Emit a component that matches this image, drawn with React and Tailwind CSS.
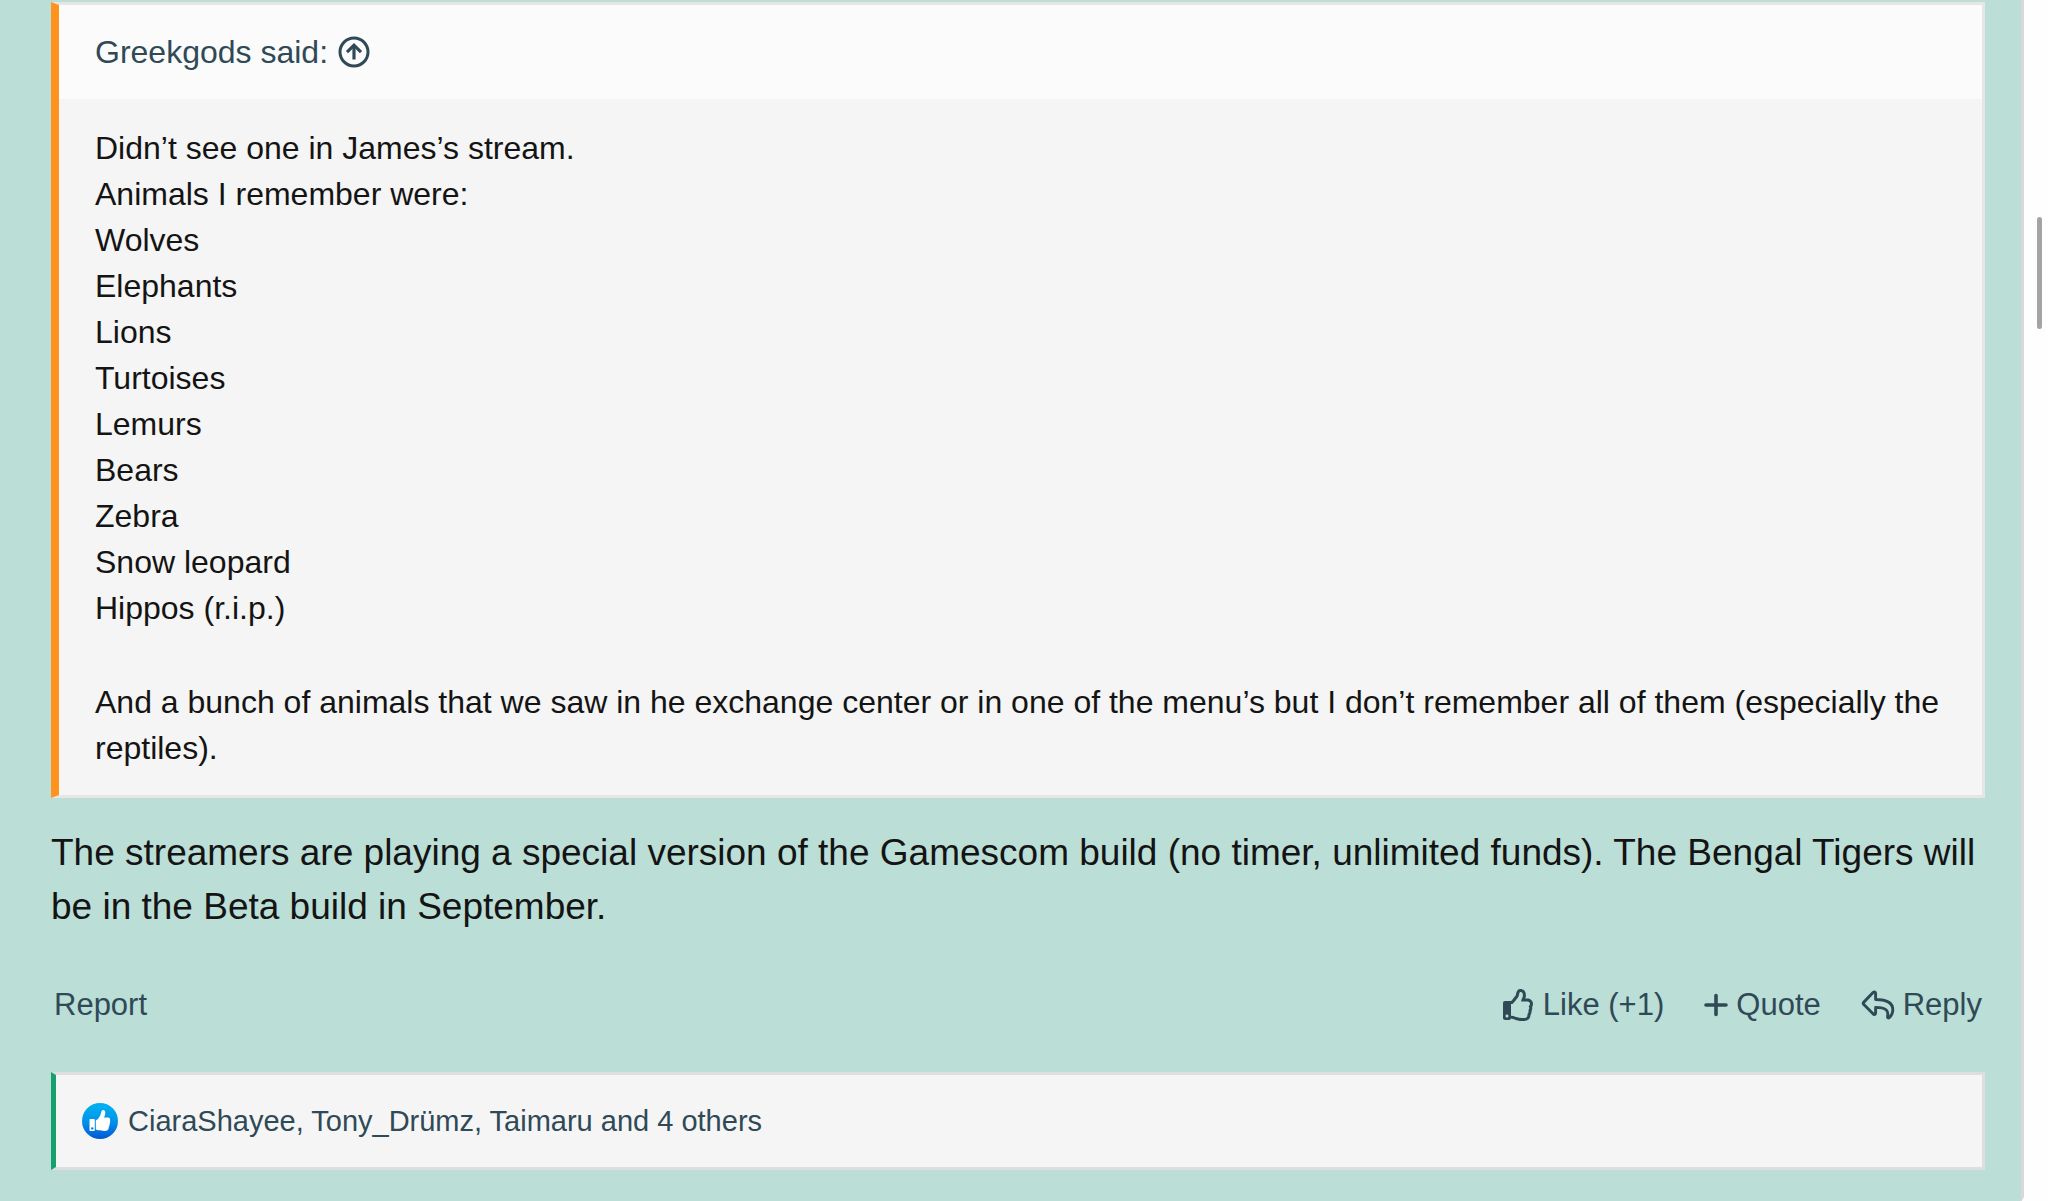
import React from "react";
import { FaRegThumbsUp } from "react-icons/fa";

const animals = [
  "Wolves",
  "Elephants",
  "Lions",
  "Turtoises",
  "Lemurs",
  "Bears",
  "Zebra",
  "Snow leopard",
  "Hippos (r.i.p.)",
];

function ArrowCircleIcon() {
  return (
    <svg viewBox="0 0 32 32" className="size-8 shrink-0" fill="none" stroke="currentColor" aria-hidden="true">
      <circle cx="16" cy="16" r="14" strokeWidth="3" />
      <path d="M16 23.500V9.500" strokeWidth="3.200" />
      <path d="M9 16.200l7-7 7 7" strokeWidth="3.200" />
    </svg>
  );
}

function PlusIcon() {
  return (
    <svg viewBox="0 0 24 24" className="size-6 shrink-0" fill="none" stroke="currentColor" strokeWidth="3.6" strokeLinecap="round" aria-hidden="true">
      <path d="M12 2.500v19M2 12h20" />
    </svg>
  );
}

function ReplyIcon() {
  return (
    <svg viewBox="0 0 34 32" className="h-8 w-[34px] shrink-0" fill="none" stroke="currentColor" strokeWidth="2.9" strokeLinejoin="round" aria-hidden="true">
      <path d="M14.6 4.3v6.2c10.500 0 17.200 3.200 17.200 10.300 0 3.300-1.500 6-3.600 7.800-.9.700-2 .1-1.700-1 1.300-5.300-.6-9.100-11.900-9.200v5.600c0 1.400-1.300 2-2.300 1.100L2.600 15.300c-.6-.5-.6-1.300 0-1.900l9.700-10.100c1-.9 2.300-.3 2.300 1z" />
    </svg>
  );
}

function LikeBadge() {
  return (
    <svg viewBox="0 0 36 36" className="size-9 shrink-0" role="img" aria-label="Like">
      <defs>
        <linearGradient id="like-fill" x1="0" y1="0" x2="0" y2="1">
          <stop offset="0.1" stopColor="#00adf0" />
          <stop offset="0.5" stopColor="#0294ea" />
          <stop offset="1" stopColor="#0258d4" />
        </linearGradient>
      </defs>
      <circle cx="18" cy="18" r="18" fill="url(#like-fill)" />
      <path
        fill="#fff"
        d="M13.800 17.600c2.500-1.400 4.500-4.200 5.100-7 .4-2 .8-3.500 2.300-3.500 1.800 0 2.300 1.900 2 3.900-.2 1.300-.7 2.500-1.200 3.600h4c1.700 0 2.300 1.200 1.900 2.500.5.800.4 1.800-.1 2.500.3.900.1 1.900-.5 2.500.2.900 0 1.800-.6 2.400-.2 2.800-1.600 3.500-3.700 3.500-3.500 0-6.500-.2-9.200-1.400z"
      />
      <path fill="#fff" fillRule="evenodd" d="M8.500 16h3.300c.6 0 1 .4 1 1v10c0 .6-.4 1-1 1H8.500c-.6 0-1-.4-1-1V17c0-.6.4-1 1-1zM10.300 24.200a1.200 1.200 0 1 0 0 2.400 1.200 1.200 0 0 0 0-2.400z" />
    </svg>
  );
}

export default function App() {
  return (
    <div className="flex min-h-screen bg-[#fefefe] font-['Liberation_Sans',Arial,sans-serif] text-[#141414]">
      <article className="flex-1 rounded-br-md border-r-[3px] border-[#d8d8d8] bg-[#bbded7] pt-[2px] pr-9 pb-8 pl-[51px]">
        <blockquote className="border-[3px] border-l-8 border-[#e6e6e6] border-l-[#ff931e] bg-[#f5f5f5] text-[32px] leading-[46px]">
          <header className="bg-[#fbfbfb] px-9 py-6 text-[#2f4a56]">
            <a href="#greekgods" className="flex items-center gap-[10px]">
              Greekgods said:
              <ArrowCircleIcon />
            </a>
          </header>
          <div className="px-9 pt-[26px] pb-6">
            <p>Didn’t see one in James’s stream.</p>
            <p>Animals I remember were:</p>
            <ul>
              {animals.map((name) => (
                <li key={name}>{name}</li>
              ))}
            </ul>
            <p className="pt-12">
              And a bunch of animals that we saw in he exchange center or in one of the menu’s but I don’t remember all of
              them (especially the reptiles).
            </p>
          </div>
        </blockquote>

        <p className="mt-7 text-[37px] leading-[54px]">
          The streamers are playing a special version of the Gamescom build (no timer, unlimited funds). The Bengal
          Tigers will be in the Beta build in September.
        </p>

        <footer className="mt-12 flex items-center justify-between px-[3px] text-[31px] leading-[46px] text-[#2f4a56]">
          <a href="#report">Report</a>
          <div className="flex items-center gap-10">
            <button type="button" className="flex items-center gap-2">
              <FaRegThumbsUp className="size-8" aria-hidden="true" />
              Like (+1)
            </button>
            <button type="button" className="flex items-center gap-2">
              <PlusIcon />
              Quote
            </button>
            <button type="button" className="flex items-center gap-2">
              <ReplyIcon />
              Reply
            </button>
          </div>
        </footer>

        <section className="mt-11 border-[3px] border-l-[5px] border-[#dedede] border-l-[#16a070] bg-[#f5f5f5] px-[26px] py-6">
          <a href="#reactions" className="flex items-center gap-[10px] text-[29px] leading-[44px] text-[#2f4a56]">
            <LikeBadge />
            CiaraShayee, Tony_Drümz, Taimaru and 4 others
          </a>
        </section>
      </article>
      <div className="flex w-6 shrink-0 justify-end pt-[217px] pr-[6px]">
        <div className="h-28 w-[5px] rounded-full bg-[#a4a4a4]" />
      </div>
    </div>
  );
}
